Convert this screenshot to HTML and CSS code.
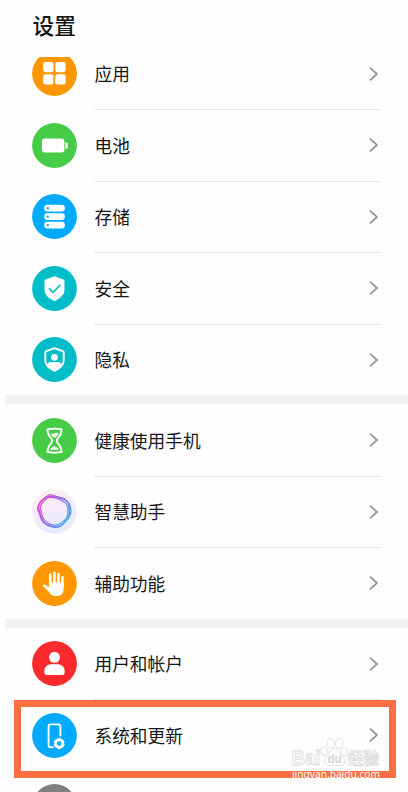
FILE: index.html
```html
<!DOCTYPE html>
<html lang="zh-CN">
<head>
<meta charset="utf-8">
<title>设置</title>
<link rel="stylesheet" href="styles.css">
</head>
<body>
<div class="screen">
  <header class="header"><h1 class="title">设置</h1></header>
  <main class="viewport">
    <div class="list">
      <section class="group">
        <div class="row">
          <svg class="icon" viewBox="0 0 45 45"><circle class="orange" cx="22.5" cy="22.5" r="22.4"/><g fill="#fff"><rect x="11.2" y="10.9" width="10.3" height="10.3" rx="2.4"/><rect x="23.3" y="10.9" width="10.3" height="10.3" rx="2.4"/><rect x="11.2" y="23.3" width="10.3" height="10.3" rx="2.4"/><rect x="23.3" y="23.3" width="10.3" height="10.3" rx="2.4"/></g></svg>
          <div class="cell"><span class="label">应用</span><svg class="chevron" viewBox="0 0 10 16"><path d="M1 1.6 8 8 1 14.4"/></svg></div>
        </div>
        <div class="row">
          <svg class="icon" viewBox="0 0 45 45"><circle class="green" cx="22.5" cy="22.5" r="22.4"/><g fill="#fff"><rect x="10" y="15.6" width="22.4" height="14" rx="3"/><path d="M33.4 19.6h1q1.4 0 1.4 1.4v3.3q0 1.4-1.4 1.4h-1z"/></g></svg>
          <div class="cell"><span class="label">电池</span><svg class="chevron" viewBox="0 0 10 16"><path d="M1 1.6 8 8 1 14.4"/></svg></div>
        </div>
        <div class="row">
          <svg class="icon" viewBox="0 0 45 45"><circle class="blue" cx="22.5" cy="22.5" r="22.4"/><g fill="#fff"><rect x="12.2" y="10.8" width="20.6" height="6.8" rx="3"/><rect x="12.2" y="19.2" width="20.6" height="6.8" rx="3"/><rect x="12.2" y="27.7" width="20.6" height="6.8" rx="3"/></g><g class="blue"><circle cx="15.8" cy="14.2" r="1.2"/><circle cx="15.8" cy="22.6" r="1.2"/><circle cx="15.8" cy="31.1" r="1.2"/></g></svg>
          <div class="cell"><span class="label">存储</span><svg class="chevron" viewBox="0 0 10 16"><path d="M1 1.6 8 8 1 14.4"/></svg></div>
        </div>
        <div class="row">
          <svg class="icon" viewBox="0 0 45 45"><circle class="teal" cx="22.5" cy="22.5" r="22.4"/><path fill="#fff" d="M22.5 10.2 31.4 13.6Q32.5 14 32.5 15.2V23.3C32.5 29 28.5 32.5 22.5 35C16.5 32.5 12.5 29 12.5 23.3V15.2Q12.5 14 13.6 13.6Z"/><path class="tick" d="m16.8 22.3 4.2 4 7.5-7.5"/></svg>
          <div class="cell"><span class="label">安全</span><svg class="chevron" viewBox="0 0 10 16"><path d="M1 1.6 8 8 1 14.4"/></svg></div>
        </div>
        <div class="row">
          <svg class="icon" viewBox="0 0 45 45"><circle class="teal" cx="22.5" cy="22.5" r="22.4"/><path class="line" d="M22.5 11.2 30.7 14.2Q31.7 14.6 31.7 15.7V23.1C31.7 28.3 28 31.5 22.5 34C17 31.5 13.3 28.3 13.3 23.1V15.7Q13.3 14.6 14.3 14.2Z"/><circle cx="22.5" cy="20.3" r="3.4" fill="#fff"/><path fill="#fff" d="M15.5 29V27.5Q15.8 24.9 18.3 24.9H26.7Q29.2 24.9 29.5 27.5V29Q27 32 22.5 33.5Q18 32 15.5 29Z"/></svg>
          <div class="cell"><span class="label">隐私</span><svg class="chevron" viewBox="0 0 10 16"><path d="M1 1.6 8 8 1 14.4"/></svg></div>
        </div>
      </section>
      <section class="group">
        <div class="row">
          <svg class="icon" viewBox="0 0 45 45"><circle class="green" cx="22.5" cy="22.5" r="22.4"/><path class="line" d="M15.3 11.5Q22.5 9.8 29.7 11.5L28.8 15.5C28.2 18.5 24.8 20 24.8 22.7C24.8 25.4 28.2 27 28.8 30L29.7 33.9Q22.5 35.5 15.3 33.9L16.2 30C16.8 27 20.2 25.4 20.2 22.7C20.2 20 16.8 18.5 16.2 15.5Z"/><path fill="#fff" d="M18.5 15.2Q20.5 16.2 22.5 15.2T26.5 15.2Q25.5 18.2 22.5 20Q19.5 18.2 18.5 15.2ZM17.7 31.7Q20 29.3 22.5 28Q25 29.3 27.3 31.7Z"/></svg>
          <div class="cell"><span class="label">健康使用手机</span><svg class="chevron" viewBox="0 0 10 16"><path d="M1 1.6 8 8 1 14.4"/></svg></div>
        </div>
        <div class="row">
          <svg class="icon" viewBox="0 0 45 45"><defs><linearGradient id="pale" x1="0" y1="0" x2=".3" y2="1"><stop stop-color="#fff0e6"/><stop offset=".55" stop-color="#f4eafa"/><stop offset="1" stop-color="#e4edff"/></linearGradient><linearGradient id="ring" x1="0" y1="0" x2="1" y2=".55"><stop stop-color="#ed34c8"/><stop offset=".45" stop-color="#a650dc"/><stop offset="1" stop-color="#35a0e8"/></linearGradient></defs><circle cx="22.5" cy="22.5" r="22.4" fill="url(#pale)"/><g class="ribbon"><path class="glow" d="M19 8C25 8.5 28 10 32 12C37 15 37.5 20 36.5 25C35 30 32 33 28 35.5C23 38 18 36.5 14 33.5C9.500 30 9.500 26 8 21.500C7 16 11 12 14 10Q16.500 8 19 8Z"/><path d="M18 6.500C24 7 26 10 31 11C36 12 38 17 38 23C38 28 33 30 31 34C28 39 21 37 17 36C12 34 11 29 8 24C4 18 9 14 13 10Q16 7 18 6.500Z"/><path d="M19 8.200C23 9 28 8 33 11C38 15 36 20 36.700 24C37 29 31 34 28 36C23 39 19 36 14 34C8 31 10 26 8 21C6 17 9 12 13 10Q16 8 19 8.200Z"/><path d="M16 9.500C22 9 26 10 30 13C35 15 35 19 35 23C35 29 33 30 29 33C25 36 21 36 17 33.500C11 30 11 27 10 22C8 17 12 13 16 9.500Z"/></g></svg>
          <div class="cell"><span class="label">智慧助手</span><svg class="chevron" viewBox="0 0 10 16"><path d="M1 1.6 8 8 1 14.4"/></svg></div>
        </div>
        <div class="row">
          <svg class="icon" viewBox="0 0 45 45"><circle class="orange" cx="22.5" cy="22.5" r="22.4"/><g class="fingers"><path d="M18.2 13.5V25M22.3 11.8V24M26.4 13V24M30.4 16.3V26"/></g><path fill="#fff" d="M17 21.5H31.6V28.5Q31.6 35 25.2 35C20.5 35 18.4 33.5 16.4 30.2L11.2 25.4Q10.3 24.2 11.4 23.6Q12.5 23.2 13.7 24L17 26.3Z"/></svg>
          <div class="cell"><span class="label">辅助功能</span><svg class="chevron" viewBox="0 0 10 16"><path d="M1 1.6 8 8 1 14.4"/></svg></div>
        </div>
      </section>
      <section class="group">
        <div class="row">
          <svg class="icon" viewBox="0 0 45 45"><circle class="red" cx="22.5" cy="22.5" r="22.4"/><circle cx="22.5" cy="16.3" r="5.5" fill="#fff"/><path fill="#fff" d="M12.4 30.2C12.4 25.5 15.5 23.2 19.5 23.2H25.5C29.5 23.2 32.6 25.5 32.6 30.2V31.5Q32.6 34 30.1 34H14.9Q12.4 34 12.4 31.5Z"/></svg>
          <div class="cell"><span class="label">用户和帐户</span><svg class="chevron" viewBox="0 0 10 16"><path d="M1 1.6 8 8 1 14.4"/></svg></div>
        </div>
        <div class="row">
          <svg class="icon" viewBox="0 0 45 45"><circle class="blue" cx="22.5" cy="22.5" r="22.4"/><path class="line" d="M20.8 34.3H18.6Q16.6 34.3 16.6 32.3V13.4Q16.6 11.4 18.6 11.4H26.4Q28.4 11.4 28.4 13.4V22.5"/><path fill="#fff" stroke="#fff" stroke-width="1" stroke-linejoin="round" d="m25.9 25.5 2.6 0 .7 1.4 1.4-.1 1.6 2.4-.8 1.3.8 1.4-1.5 2.4-1.5-.1-.7 1.4h-2.6l-.8-1.4-1.5.1-1.4-2.4.8-1.4-.8-1.3 1.4-2.4 1.5.1z"/><circle class="blue" cx="27.2" cy="30.5" r="2.3"/></svg>
          <div class="cell"><span class="label">系统和更新</span><svg class="chevron" viewBox="0 0 10 16"><path d="M1 1.6 8 8 1 14.4"/></svg></div>
        </div>
        <div class="row">
          <svg class="icon" viewBox="0 0 45 45"><circle class="gray" cx="22.5" cy="22.5" r="22.4"/></svg>
          <div class="cell"></div>
        </div>
      </section>
    </div>
  </main>
  <div class="highlight"></div>
  <div class="watermark">
    <svg class="brand" viewBox="0 0 92 32">
      <g class="outline"><text class="latin" x="1.5" y="28.3" textLength="29" lengthAdjust="spacingAndGlyphs">Bai</text><ellipse cx="34.2" cy="14.2" rx="3.5" ry="4.3" transform="rotate(-15 34.2 14.2)"/><ellipse cx="40.6" cy="6.500" rx="3.700" ry="4.900"/><ellipse cx="49.200" cy="6.500" rx="3.700" ry="4.900" transform="rotate(12 49.200 6.500)"/><ellipse cx="54.400" cy="14.500" rx="3.500" ry="4.300"/><path d="M44.500 11.500C48.500 11.500 50 16.500 52.200 19.200C57 23.500 55 29.200 50 28.700Q44.500 27.900 40 28.700C34.500 29.200 32.500 24.500 36.500 20C40 16.500 40.500 11.500 44.500 11.500Z"/><text class="han" x="58" y="26.500" textLength="31" lengthAdjust="spacingAndGlyphs">经验</text></g><text class="du" x="37.500" y="26" textLength="14" lengthAdjust="spacingAndGlyphs">du</text>
    </svg>
    <svg class="site" viewBox="0 0 92 16"><text x="2" y="9" textLength="88" lengthAdjust="spacingAndGlyphs">jingyan.baidu.com</text></svg>
  </div>
</div>
</body>
</html>
```
FILE: styles.css
```css
* { box-sizing: border-box; }
body { margin: 0; background: #fff; font-family: "Noto Sans CJK SC", sans-serif; color: #151515; }
.screen { position: relative; width: 408px; height: 792px; overflow: hidden; display: flex; flex-direction: column; background: #fefefe; }
.header { flex: 0 0 56.5px; padding: 8.5px 0 0 32.5px; }
.title { margin: 0; font-size: 21.7px; line-height: 32px; font-weight: 500; }
.viewport { flex: 1; min-height: 0; overflow: hidden; }
.list { margin-top: -18.75px; }
.group + .group { border-top: 9px solid #f2f2f2; }
.group { margin-left: 5px; }
.row { display: flex; height: 71.5px; padding: 0 28px 0 26.6px; align-items: center; }
.icon { flex: 0 0 45px; width: 45px; height: 45px; }
.cell { flex: 1; height: 100%; margin-left: 17.9px; display: flex; align-items: center; justify-content: space-between; box-shadow: 0 1px #e5e5e5; }
.row:last-child .cell { box-shadow: none; }
.label { font-size: 17.7px; line-height: 26px; margin-top: -1px; }
.chevron { width: 10px; height: 16px; margin-right: 1px; fill: none; stroke: #929292; stroke-width: 1.7; }
.orange { fill: #ff9800; }
.green { fill: #47cc47; }
.blue { fill: #00aaff; }
.teal { fill: #00bdc7; }
.red { fill: #fa2a2d; }
.gray { fill: #808080; }
.tick { fill: none; stroke: #00bdc7; stroke-width: 1.6; }
.line { fill: none; stroke: #fff; stroke-width: 1.9; stroke-linejoin: round; stroke-linecap: round; }
.fingers { fill: none; stroke: #fff; stroke-width: 2.6; stroke-linecap: round; }
.ribbon { fill: none; stroke: url(#ring); stroke-width: .9; transform: translate(22.5px, 22.5px) scale(1.06) translate(-22.5px, -22.5px); }
.glow { stroke-width: 2.8; opacity: .5; }
.highlight { position: absolute; left: 14px; top: 700px; width: 382px; height: 78px; border: 7.5px solid #fb6f42; }
.watermark { position: absolute; left: 290px; top: 737px; width: 92px; display: flex; flex-direction: column; }
.brand { width: 92px; height: 32px; }
.outline { fill: #fff; stroke: #d8d8d8; stroke-width: .8; }
.latin { font: bold 20px "Liberation Sans", sans-serif; }
.han { font: bold 15.5px "Noto Sans CJK SC", sans-serif; }
.du { font: bold 12px "Liberation Sans", sans-serif; fill: #d2d2d2; }
.site { width: 92px; height: 16px; overflow: visible; font: 10.4px "Noto Sans", sans-serif; fill: #fff; }
```
